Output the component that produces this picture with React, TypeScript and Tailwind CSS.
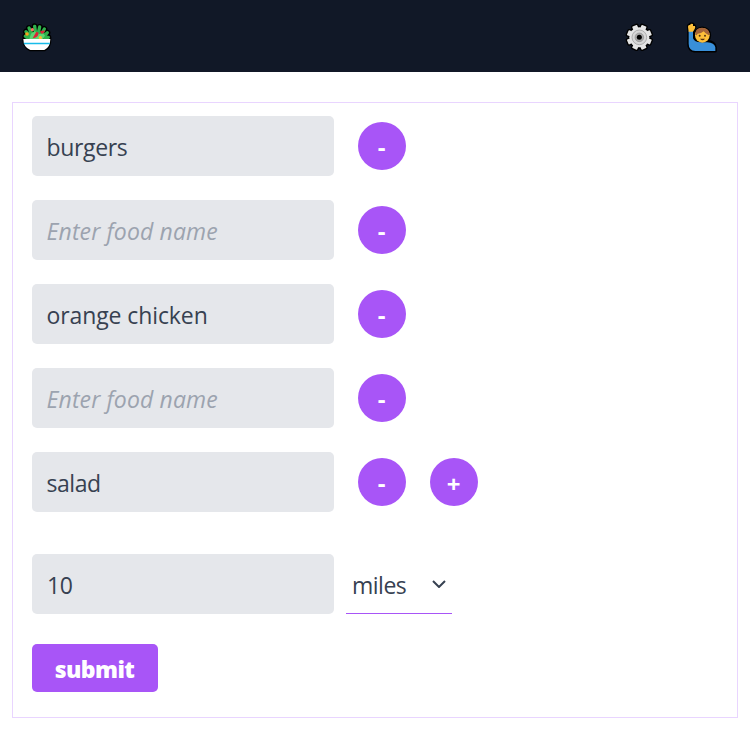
import React from "react";

const LEAVES = "M48 50 L61 62 M57 39 L66 58 M74 34 L77 56 M89 36 L84 58 M103 42 L94 58 M112 53 L100 66 M46 64 L56 69 M115 67 L106 69";

function SaladIcon() {
  return (
    <svg width="55" height="45" viewBox="0 0 165 135" aria-label="salad">
      <g stroke="#000" strokeLinecap="round" strokeLinejoin="round" fill="#000">
        <path d={LEAVES} strokeWidth="18" />
        <path d="M41 72 H120 Q121 94 104 105 H61 Q40 94 41 72Z" strokeWidth="8" />
      </g>
      <path d="M46 71 Q50 55 64 52 H98 Q112 55 116 71Z" fill="#149c42" />
      <path d={LEAVES} stroke="#2fb24c" strokeWidth="10" strokeLinecap="round" />
      <path d="M58 72 L63 56 L74 49 L88 57 L99 55 L105 62 L98 72Z" fill="#5cd670" />
      <path d="M68 70 L79 50 L86 53 Q85 65 75 68Z M90 49 L104 46 Q105 54 95 57Z" fill="#dc2437" />
      <circle cx="67" cy="44" r="5" fill="#f47562" />
      <circle cx="51" cy="57" r="5.5" fill="#f8a11b" />
      <circle cx="91" cy="68" r="5" fill="#fdbd28" />
      <path d="M40 72 H121 Q121 96 103 105 H61 Q40 96 40 72Z" fill="#fff" />
      <path d="M41 83 H120 L119 88 H42Z" fill="#18bce9" />
    </svg>
  );
}

function GearTeeth() {
  return (
    <>
      <circle cx="73" cy="67" r="30" />
      <rect x="65" y="29.5" width="16" height="75" rx="2" transform="rotate(22.5 73 67)" />
      <rect x="65" y="29.5" width="16" height="75" rx="2" transform="rotate(67.5 73 67)" />
      <rect x="65" y="29.5" width="16" height="75" rx="2" transform="rotate(112.5 73 67)" />
      <rect x="65" y="29.5" width="16" height="75" rx="2" transform="rotate(157.5 73 67)" />
    </>
  );
}

function GearIcon() {
  return (
    <svg width="55" height="45" viewBox="0 0 165 135" aria-label="settings">
      <g fill="#000" stroke="#000" strokeWidth="8" strokeLinejoin="round">
        <GearTeeth />
      </g>
      <g fill="#e5e5e5">
        <GearTeeth />
      </g>
      <circle cx="73" cy="67" r="22" fill="#d8d8d8" stroke="#a3a3a3" strokeWidth="2.5" />
      <circle cx="73" cy="67" r="13" fill="#aaa" stroke="#909090" strokeWidth="2" />
      <circle cx="73" cy="67" r="7.5" fill="#000" />
    </svg>
  );
}

function RaisedHandIcon() {
  return (
    <svg width="55" height="45" viewBox="0 0 165 135" aria-label="profile">
      <g fill="#000" stroke="#000" strokeWidth="9" strokeLinejoin="round">
        <path d="M41 46 L40 33 L47 27 H53 L60 36 L55 48 V71 L65 79 H97 Q119 81 121 97 V108 H58 Q41 104 41 86Z" />
        <circle cx="82" cy="61" r="22" />
      </g>
      <path d="M41 47 H54 V70 Q59 82 76 82 H97 Q118 83 121 97 V108 H61 Q41 106 41 86Z" fill="#398fd9" />
      <path d="M41 50 L39 35 Q39 29 45 30 L48 26 L54 27 V33 H60 Q62 38 59 42 L54 50Z" fill="#fdbf3a" />
      <circle cx="82" cy="61" r="22" fill="#fdbf3a" />
      <path d="M61 60 Q60 38 81 38 Q101 38 104 57 L101 61 Q91 56 86 49 Q79 56 68 56 L65 61Z" fill="#a4643a" />
      <circle cx="74" cy="62" r="3" fill="#543111" />
      <circle cx="90" cy="62" r="3" fill="#543111" />
      <path d="M75 71 Q83 80 90 71Z" fill="#543111" />
    </svg>
  );
}

function FoodRow({ value, spacing, last }: { value: string; spacing: string; last?: boolean }) {
  return (
    <div className="flex h-[60px]">
      <input
        className={`h-[60px] w-[302px] rounded-[5px] bg-[#e5e7eb] px-[14.5px] pt-[1px] text-[23px] text-[#374151] outline-none placeholder:text-[#9ca3af] placeholder:italic ${spacing}`}
        defaultValue={value}
        placeholder="Enter food name"
      />
      <button className="mt-[6px] ml-6 h-12 w-12 rounded-full bg-[#a855f7] pt-[1px] pr-[1px] text-[24px] leading-none font-bold text-white">-</button>
      {last && <button className="mt-[6px] ml-6 h-12 w-12 rounded-full bg-[#a855f7] pt-[3px] pr-[1px] text-[24px] leading-none font-bold text-white">+</button>}
    </div>
  );
}

export default function App() {
  return (
    <div className="flex h-[734px] w-[750px] flex-col bg-white font-['Open_Sans','Noto_Sans',sans-serif]">
      <header className="flex h-[72px] items-start bg-[#111827] pt-[15px] pl-[10px]">
        <SaladIcon />
        <div className="ml-[550px] flex gap-[5px]">
          <GearIcon />
          <RaisedHandIcon />
        </div>
      </header>
      <main className="mx-3 mt-[30px] h-[616px] border border-[#e9d5ff] pt-[13px] pl-[19px]">
        <div className="flex flex-col gap-6">
          <FoodRow value="burgers" spacing="tracking-[-0.35px]" />
          <FoodRow value="" spacing="tracking-[0.13px]" />
          <FoodRow value="orange chicken" spacing="tracking-[-0.1px]" />
          <FoodRow value="" spacing="tracking-[0.13px]" />
          <FoodRow value="salad" spacing="tracking-[-0.45px]" last />
        </div>
        <div className="mt-[42px] flex h-[60px]">
          <input className="h-[60px] w-[302px] rounded-[5px] bg-[#e5e7eb] px-[15px] pt-[1px] text-[23px] tracking-[-0.5px] text-[#374151] outline-none" defaultValue="10" />
          <div className="ml-3 flex h-[60px] w-[106px] items-center justify-between border-b border-[#a855f7] pr-[6px] pl-[6px] text-[23px] tracking-[-0.5px] text-[#374151]">
            <span className="pt-[4px]">miles</span>
            <svg width="14" height="8" viewBox="0 0 14 8" fill="none" stroke="#374151" strokeWidth="2">
              <path d="M1 1 L7 7 L13 1" />
            </svg>
          </div>
        </div>
        <button className="mt-[30px] h-12 w-[126px] rounded-[5px] bg-[#a855f7] pt-[3px] pr-[1px] text-[23px] leading-none font-extrabold tracking-[-0.6px] text-white">submit</button>
      </main>
    </div>
  );
}
